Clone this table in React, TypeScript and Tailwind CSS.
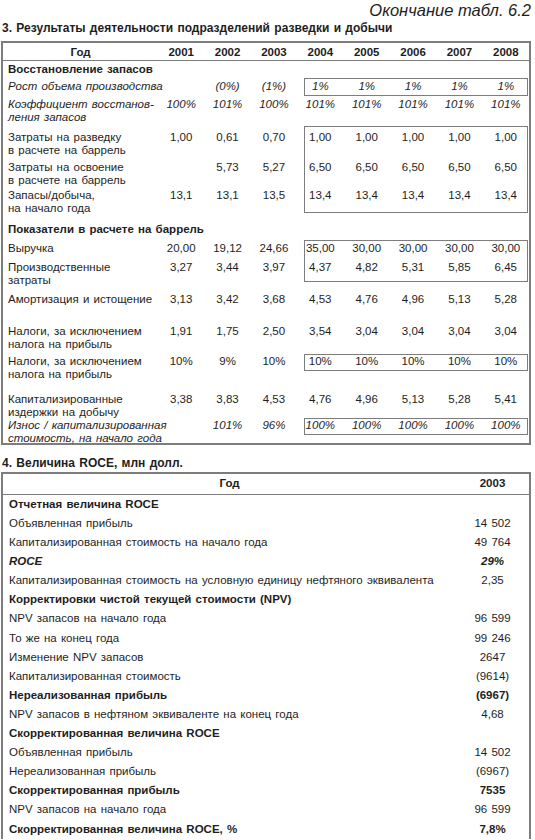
type Row1 = {
  label: string[]
  values?: string[]
  bold?: boolean
  italic?: boolean
  row: string
  pt: string
}

const five = (v: string) => [v, v, v, v, v]

const table1: Row1[] = [
  { label: ['Восстановление запасов'], bold: true, row: 'row-start-1', pt: 'pt-[2px]' },
  { label: ['Рост объема производства'], italic: true, values: ['', '(0%)', '(1%)', ...five('1%')], row: 'row-start-2', pt: 'pt-[2px]' },
  {
    label: ['Коэффициент восстанов-', 'ления запасов'],
    italic: true,
    values: ['100%', '101%', '100%', ...five('101%')],
    row: 'row-start-3',
    pt: 'pt-[2px]',
  },
  { label: ['Затраты на разведку', 'в расчете на баррель'], values: ['1,00', '0,61', '0,70', ...five('1,00')], row: 'row-start-4', pt: 'pt-[5px]' },
  { label: ['Затраты на освоение', 'в расчете на баррель'], values: ['', '5,73', '5,27', ...five('6,50')], row: 'row-start-5', pt: 'pt-[4px]' },
  { label: ['Запасы/добыча,', 'на начало года'], values: ['13,1', '13,1', '13,5', ...five('13,4')], row: 'row-start-6', pt: 'pt-[4px]' },
  { label: ['Показатели в расчете на баррель'], bold: true, row: 'row-start-7', pt: 'pt-[10px]' },
  { label: ['Выручка'], values: ['20,00', '19,12', '24,66', '35,00', '30,00', '30,00', '30,00', '30,00'], row: 'row-start-8', pt: 'pt-[2px]' },
  { label: ['Производственные', 'затраты'], values: ['3,27', '3,44', '3,97', '4,37', '4,82', '5,31', '5,85', '6,45'], row: 'row-start-9', pt: 'pt-[3px]' },
  { label: ['Амортизация и истощение'], values: ['3,13', '3,42', '3,68', '4,53', '4,76', '4,96', '5,13', '5,28'], row: 'row-start-10', pt: 'pt-[11px]' },
  {
    label: ['Налоги, за исключением', 'налога на прибыль'],
    values: ['1,91', '1,75', '2,50', '3,54', '3,04', '3,04', '3,04', '3,04'],
    row: 'row-start-11',
    pt: 'pt-[6px]',
  },
  { label: ['Налоги, за исключением', 'налога на прибыль'], values: ['10%', '9%', '10%', ...five('10%')], row: 'row-start-12', pt: 'pt-[1px]' },
  {
    label: ['Капитализированные', 'издержки на добычу'],
    values: ['3,38', '3,83', '4,53', '4,76', '4,96', '5,13', '5,28', '5,41'],
    row: 'row-start-13',
    pt: 'pt-[22px]',
  },
  {
    label: ['Износ / капитализированная', 'стоимость, на начало года'],
    italic: true,
    values: ['', '101%', '96%', ...five('100%')],
    row: 'row-start-14',
    pt: 'pt-[1px]',
  },
]

const boxes = [
  'row-start-2 row-span-1',
  'row-start-4 row-span-3',
  'row-start-8 row-span-2',
  'row-start-12 row-span-1',
  'row-start-14 row-span-1',
]

const colStarts = ['col-start-2', 'col-start-3', 'col-start-4', 'col-start-5', 'col-start-6', 'col-start-7', 'col-start-8', 'col-start-9']
const years = ['2001', '2002', '2003', '2004', '2005', '2006', '2007', '2008']

type Row2 = { label: string; value?: string; bold?: boolean; italic?: boolean }

const table2: Row2[] = [
  { label: 'Отчетная величина ROCE', bold: true },
  { label: 'Объявленная прибыль', value: '14 502' },
  { label: 'Капитализированная стоимость на начало года', value: '49 764' },
  { label: 'ROCE', value: '29%', bold: true, italic: true },
  { label: 'Капитализированная стоимость на условную единицу нефтяного эквивалента', value: '2,35' },
  { label: 'Корректировки чистой текущей стоимости (NPV)', bold: true },
  { label: 'NPV запасов на начало года', value: '96 599' },
  { label: 'То же на конец года', value: '99 246' },
  { label: 'Изменение NPV запасов', value: '2647' },
  { label: 'Капитализированная стоимость', value: '(9614)' },
  { label: 'Нереализованная прибыль', value: '(6967)', bold: true },
  { label: 'NPV запасов в нефтяном эквиваленте на конец года', value: '4,68' },
  { label: 'Скорректированная величина ROCE', bold: true },
  { label: 'Объявленная прибыль', value: '14 502' },
  { label: 'Нереализованная прибыль', value: '(6967)' },
  { label: 'Скорректированная прибыль', value: '7535', bold: true },
  { label: 'NPV запасов на начало года', value: '96 599' },
  { label: 'Скорректированная величина ROCE, %', value: '7,8%', bold: true },
]

function ResultsTable() {
  return (
    <div className="mt-[5px] border-2 border-[#7d7d7d]">
      <div className="grid h-[18px] grid-cols-[155px_repeat(8,1fr)] border-b border-[#7d7d7d] font-bold leading-[18px]">
        <div className="text-center">Год</div>
        {years.map((y) => (
          <div key={y} className="text-center">
            {y}
          </div>
        ))}
      </div>
      <div className="grid grid-cols-[155px_repeat(8,1fr)] grid-rows-[17px_18px_30px_31px_28px_28px_27px_18px_24px_37px_35px_17px_47px_17px] pb-[8px] leading-[13px]">
        {boxes.map((b) => (
          <div key={b} className={`${b} col-start-5 col-span-5 ml-[7px] mr-[1px] border border-[#7d7d7d]`} />
        ))}
        {table1.map((r, i) => (
          <div key={i} className="contents">
            <div
              className={`${r.row} col-start-1 ${r.values ? '' : 'col-span-9'} ${r.pt} pl-[5px] whitespace-nowrap ${r.bold ? 'font-bold' : ''} ${r.italic ? 'italic' : ''}`}
            >
              {r.label.map((l) => (
                <div key={l}>{l}</div>
              ))}
            </div>
            {r.values?.map((v, j) => (
              <div key={j} className={`${r.row} ${colStarts[j]} ${r.pt} text-center ${r.italic ? 'italic' : ''}`}>
                {v}
              </div>
            ))}
          </div>
        ))}
      </div>
    </div>
  )
}

function RoceTable() {
  return (
    <div className="mt-[1px] border-2 border-b-0 border-[#7d7d7d]">
      <div className="flex h-[21px] items-center border-b border-[#7d7d7d] font-bold">
        <div className="flex-1 text-center">Год</div>
        <div className="w-[73px] text-center">2003</div>
      </div>
      {table2.map((r, i) => (
        <div key={i} className={`flex h-[19.1px] items-center ${r.bold ? 'font-bold' : ''} ${r.italic ? 'italic' : ''}`}>
          <div className="flex-1 pl-[6px] whitespace-nowrap">{r.label}</div>
          <div className="w-[73px] text-center">{r.value}</div>
        </div>
      ))}
    </div>
  )
}

export default function App() {
  return (
    <div className="h-[840px] w-[535px] overflow-hidden bg-white pl-px pr-[4px] font-['Liberation_Sans',Arial,sans-serif] text-[11.5px] [word-spacing:1px] text-[#1e1e1e]">
      <div className="h-[20px] text-right text-[16.5px] leading-[20px] italic [word-spacing:0px]">Окончание табл. 6.2</div>
      <h2 className="pl-px text-[12px] leading-[16px] font-bold">3. Результаты деятельности подразделений разведки и добычи</h2>
      <ResultsTable />
      <h2 className="mt-[10px] pl-px text-[12px] leading-[16px] font-bold">4. Величина ROCE, млн долл.</h2>
      <RoceTable />
    </div>
  )
}
